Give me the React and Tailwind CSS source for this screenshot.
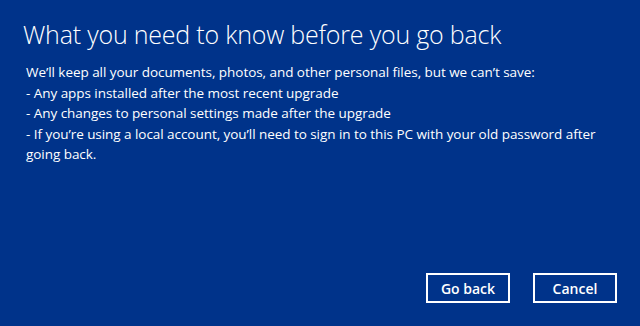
export default function App() {
  return (
    <div
      className="w-[640px] h-[326px] bg-[#00338a] text-white flex flex-col"
      style={{ fontFamily: '"Open Sans", "Noto Sans", sans-serif' }}
    >
      <h1 className="pt-[16px] pl-[23px] text-[25px] font-light leading-[36px] tracking-[-0.2px]">
        What you need to know before you go back
      </h1>
      <div className="pl-[26px] pt-[10px] text-[13.5px] leading-[20.5px] pr-[20px] tracking-[-0.05px]">
        <p>We’ll keep all your documents, photos, and other personal files, but we can’t save:</p>
        <p>- Any apps installed after the most recent upgrade</p>
        <p>- Any changes to personal settings made after the upgrade</p>
        <p>- If you’re using a local account, you’ll need to sign in to this PC with your old password after going back.</p>
      </div>
      <div className="mt-auto mb-[23px] mr-[23px] flex justify-end gap-[23px]">
        <button className="w-[84px] h-[30px] border-2 border-white text-[14px] font-semibold">Go back</button>
        <button className="w-[84px] h-[30px] border-2 border-white text-[14px] font-semibold">Cancel</button>
      </div>
    </div>
  );
}
